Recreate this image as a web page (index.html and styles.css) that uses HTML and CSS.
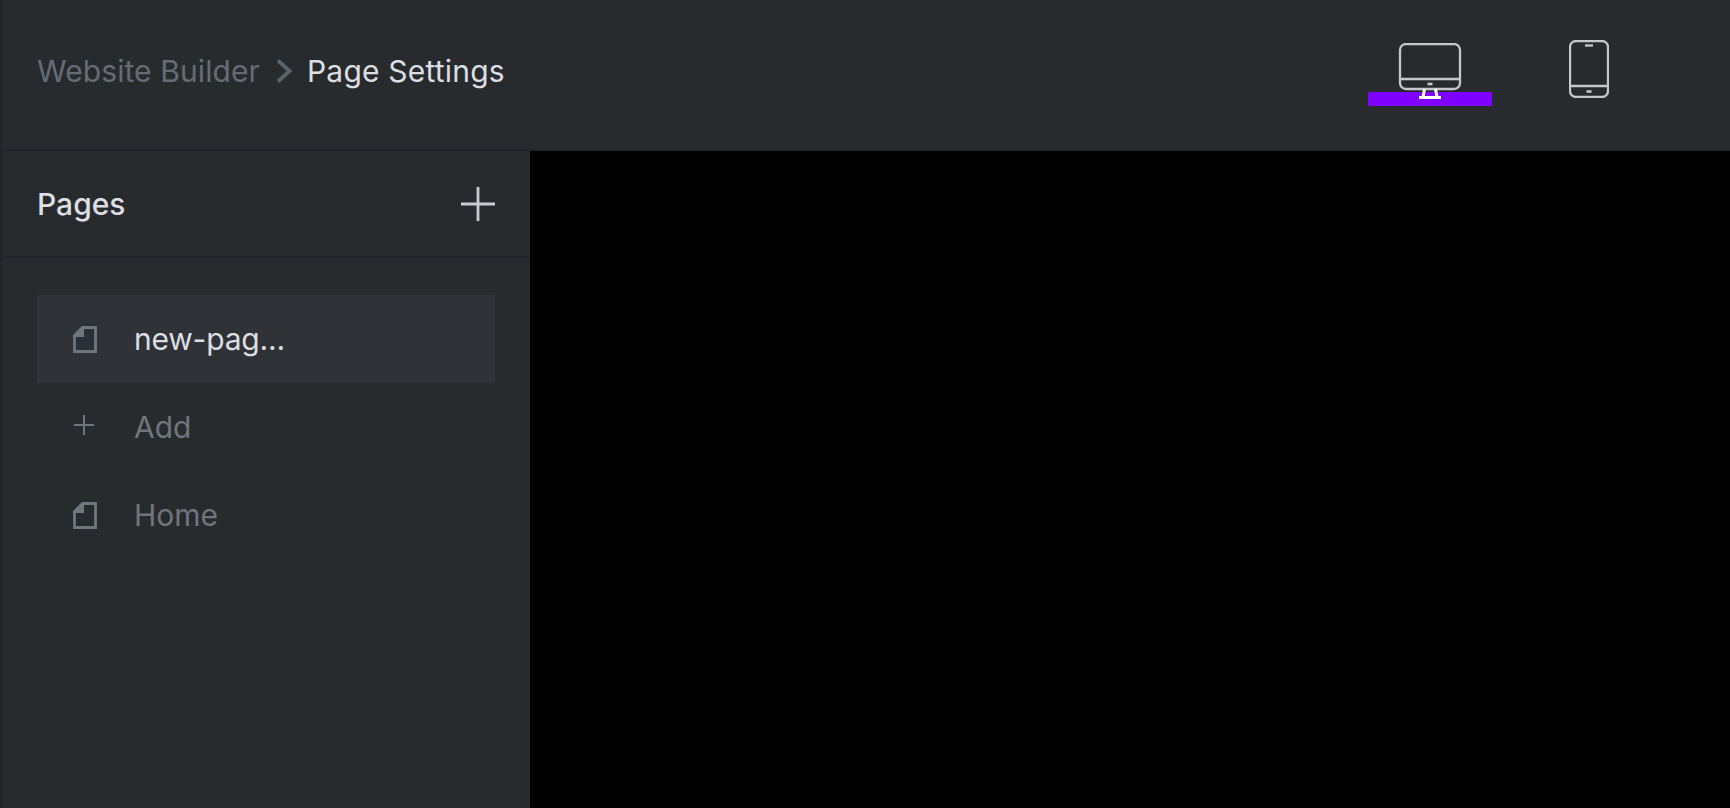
FILE: index.html
```html
<!DOCTYPE html>
<html lang="en">
<head>
  <meta charset="UTF-8" />
  <meta name="viewport" content="width=device-width, initial-scale=1" />
  <title>Website Builder - Page Settings</title>
  <link rel="stylesheet" href="styles.css">
</head>
<body>
  <header class="topbar">
    <nav class="crumbs">
      <span class="crumb">Website Builder</span>
      <svg class="crumb-sep" width="16" height="24" viewBox="0 0 16 24" fill="none">
        <path d="M2 1.500 L13.500 12 L2 22.500" stroke="#5d636b" stroke-width="3.800" />
      </svg>
      <span class="crumb current">Page Settings</span>
    </nav>
    <div class="devices">
      <button class="device active">
        <span class="device-bar"></span>
        <svg class="device-icon" width="64" height="56" viewBox="0 0 64 56" fill="none" stroke="#c5c7ca" stroke-width="2.300">
          <rect x="2" y="1" width="60" height="45" rx="6" />
          <path d="M2 36 H62" />
          <path d="M29.500 41 H34.500" stroke-width="2.600" />
          <path d="M26.500 46 L25 54 M37.500 46 L39 54" stroke="#fff" stroke-width="3" />
          <path d="M21 54.500 H43" stroke="#fff" stroke-width="3" />
        </svg>
      </button>
      <button class="device">
        <svg class="device-icon phone" width="40" height="58" viewBox="0 0 40 58" fill="none" stroke="#c5c7ca" stroke-width="2.300">
          <rect x="1" y="1" width="38" height="56" rx="6" />
          <path d="M1 46 H39" />
          <path d="M16 5.500 H24" />
          <path d="M17.500 51.500 H22.500" stroke-width="2.600" />
        </svg>
      </button>
    </div>
  </header>

  <div class="main">
    <aside class="sidebar">
      <div class="sidebar-head">
        <h2>Pages</h2>
        <svg width="34" height="34" viewBox="0 0 34 34" stroke="#c9ccd0" stroke-width="2.800">
          <path d="M17 0 V34 M0 17 H34" />
        </svg>
      </div>
      <ul class="pages">
        <li class="page active">
          <svg class="page-icon" width="24" height="27" viewBox="0 0 24 27" fill="none" stroke="#71767d" stroke-width="2.800">
            <path d="M1.500 9.500 L9.500 1.500 H22.500 V25.500 H1.500 Z" fill="#2a3038" />
            <path d="M1 11 L11 1 V11 Z" fill="#71767d" stroke="none" />
          </svg>
          <span class="page-name">new-pag...</span>
        </li>
        <li class="page">
          <svg class="page-icon" width="24" height="24" viewBox="0 0 24 24" stroke="#71767d" stroke-width="2">
            <path d="M11 0 V20 M1 10 H21" />
          </svg>
          <span>Add</span>
        </li>
        <li class="page">
          <svg class="page-icon" width="24" height="27" viewBox="0 0 24 27" fill="none" stroke="#71767d" stroke-width="2.800">
            <path d="M1.500 9.500 L9.500 1.500 H22.500 V25.500 H1.500 Z" />
            <path d="M1 11 L11 1 V11 Z" fill="#71767d" stroke="none" />
          </svg>
          <span>Home</span>
        </li>
      </ul>
    </aside>
    <div class="canvas"></div>
  </div>
</body>
</html>
```

FILE: styles.css
```css
* {
  box-sizing: border-box;
}
body {
  margin: 0;
  height: 808px;
  overflow: hidden;
  font-family: Inter, "Liberation Sans", sans-serif;
  background-color: #282b2e;
  border-left: 2px solid #212428;
  display: flex;
  flex-direction: column;
}

/* Top bar */
.topbar {
  height: 151px;
  flex-shrink: 0;
  display: flex;
  align-items: center;
  justify-content: space-between;
  padding: 0 79px 8px 35px;
  border-bottom: 2px solid #212428;
}
.crumbs {
  display: flex;
  align-items: center;
  gap: 14px;
}
.crumb {
  font-size: 30px;
  letter-spacing: 0.1px;
  color: #666c75;
}
.crumb.current {
  letter-spacing: 0.2px;
  color: #dcdee2;
}
.crumb-sep {
  margin: 0 1px 0 2px;
}
.devices {
  display: flex;
  align-items: center;
  gap: 35px;
}
.device {
  position: relative;
  width: 124px;
  height: 60px;
  padding: 0;
  background: none;
  border: none;
  display: flex;
  align-items: center;
  justify-content: center;
}
.device-icon {
  position: relative;
}
.device-icon.phone {
  margin-bottom: 3px;
}
.device-bar {
  position: absolute;
  left: 0;
  right: 0;
  bottom: -5px;
  height: 14px;
  background-color: #7f00ff;
}

/* Sidebar */
.main {
  flex: 1;
  display: flex;
}
.sidebar {
  width: 528px;
  flex-shrink: 0;
}
.sidebar-head {
  height: 107px;
  display: flex;
  align-items: center;
  justify-content: space-between;
  padding: 0 35px 0 35px;
  border-bottom: 2px solid #212428;
}
.sidebar-head h2 {
  margin: 0;
  font-size: 30px;
  font-weight: 500;
  color: #dcdee2;
}
.pages {
  list-style: none;
  margin: 0;
  padding: 37px 35px 0 35px;
}
.page {
  height: 88px;
  display: flex;
  align-items: center;
  padding-left: 36px;
  font-size: 30px;
  color: #70757d;
}
.page.active {
  background-color: #2f3237;
  color: #dcdee2;
}
.page-icon {
  flex-shrink: 0;
}
.page span {
  margin-left: 37px;
}
.page .page-name {
  letter-spacing: -0.2px;
}
.canvas {
  flex: 1;
  background-color: #000;
}
```
